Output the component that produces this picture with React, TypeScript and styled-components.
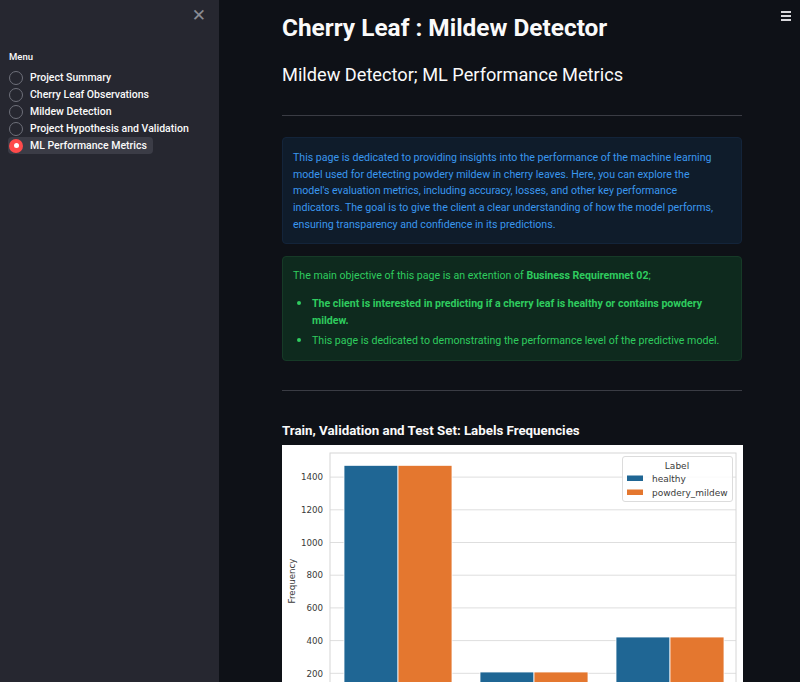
import React from "react";
import styled, { createGlobalStyle } from "styled-components";

const Global = createGlobalStyle`
  html, body { margin: 0; padding: 0; height: 100%; overflow: hidden; background: #0e1117; }
  #root { height: 100%; }
  * { box-sizing: border-box; }
`;

const Shell = styled.div`
  display: flex;
  width: 800px;
  height: 682px;
  overflow: hidden;
  font-family: Roboto, "Liberation Sans", sans-serif;
  color: #fafafa;
`;

const Sidebar = styled.aside`
  position: relative;
  width: 219px;
  flex-shrink: 0;
  background: #262730;
  padding: 50px 8px 0 8px;
  display: flex;
  flex-direction: column;
`;

const CloseBtn = styled.div`
  position: absolute;
  top: 7px;
  right: 13px;
  color: #8a8c94;
  font-size: 17px;
  font-weight: 700;
  line-height: 1;
  font-family: "DejaVu Sans", sans-serif;
`;

const MenuLabel = styled.div`
  font-size: 9.5px;
  font-weight: 500;
  padding-left: 1px;
  height: 14px;
  line-height: 14px;
  margin-bottom: 5px;
  color: #fafafa;
`;

const RadioList = styled.div`
  display: flex;
  flex-direction: column;
  align-items: flex-start;
`;

const RadioRow = styled.div<{ $active?: boolean }>`
  display: flex;
  align-items: center;
  gap: 7px;
  height: 17px;
  padding: 0 6px 0 1px;
  border-radius: 4px;
  background: ${(p) => (p.$active ? "#3b3c46" : "transparent")};
  font-size: 10.5px;
  font-weight: 500;
  color: #fafafa;
  white-space: nowrap;
`;

const RadioDot = styled.span<{ $active?: boolean }>`
  width: 14px;
  height: 14px;
  border-radius: 50%;
  flex-shrink: 0;
  border: ${(p) => (p.$active ? "none" : "1.5px solid #6e707a")};
  background: ${(p) => (p.$active ? "#ff4b4b" : "transparent")};
  display: flex;
  align-items: center;
  justify-content: center;
  &::after {
    content: "";
    display: ${(p) => (p.$active ? "block" : "none")};
    width: 5px;
    height: 5px;
    border-radius: 50%;
    background: #ffffff;
  }
`;

const Main = styled.main`
  position: relative;
  flex: 1;
  background: #0e1117;
  overflow: hidden;
  padding: 12px 0 0 63px;
`;

const MenuBtn = styled.div`
  position: absolute;
  top: 11px;
  right: 9px;
  width: 10px;
  display: flex;
  flex-direction: column;
  gap: 2px;
  & span {
    display: block;
    height: 2px;
    background: #d8d8dc;
  }
`;

const Content = styled.div`
  width: 460px;
  display: flex;
  flex-direction: column;
`;

const Title = styled.h1`
  margin: 0;
  font-size: 24.4px;
  font-weight: 700;
  line-height: 32px;
  color: #fafafa;
`;

const Subtitle = styled.h2`
  margin: 18px 0 0 0;
  font-size: 18.2px;
  font-weight: 400;
  line-height: 26px;
  color: #fafafa;
`;

const Rule = styled.hr<{ $top: number; $bottom: number }>`
  border: none;
  height: 1px;
  background: #3a3c44;
  margin: ${(p) => p.$top}px 0 ${(p) => p.$bottom}px 0;
  width: 100%;
`;

const Alert = styled.div<{ $kind: "info" | "success" }>`
  border-radius: 4px;
  background: ${(p) => (p.$kind === "info" ? "#0f1c2b" : "#0e2a1e")};
  border: 1px solid ${(p) => (p.$kind === "info" ? "#13243a" : "#163a27")};
  color: ${(p) => (p.$kind === "info" ? "#3a97ef" : "#2fcc5f")};
  font-size: 10.6px;
  line-height: 16.7px;
  padding: ${(p) => (p.$kind === "info" ? "12px 10px 9px 10px" : "11px 10px 9px 10px")};
  margin-bottom: 12px;
  & p { margin: 0; white-space: nowrap; }
  & b { font-weight: 700; }
`;

const Bullets = styled.ul`
  margin: 11px 0 0 0;
  padding-left: 19px;
  white-space: nowrap;
  & li { margin: 0 0 2px 0; }
  & li::marker { font-size: 13px; }
`;

const SectionTitle = styled.h3`
  margin: 0 0 4px 0;
  font-size: 13.3px;
  font-weight: 700;
  line-height: 20px;
  color: #fafafa;
`;

const ChartFrame = styled.div`
  width: 461px;
  background: #ffffff;
`;

const AXL = 48;
const AXR = 454;
const AXT = 8;
const Y0 = 261;
const K = 0.1635;
const yOf = (v: number) => Y0 - v * K;

const groups = [
  { label: "train", h: 1472, x: 62 },
  { label: "validation", h: 208, x: 198 },
  { label: "test", h: 422, x: 334 },
];
const BLUE = "#1f6694";
const ORANGE = "#e4772f";
const BW = 54;

function FreqChart() {
  const ticks = [0, 200, 400, 600, 800, 1000, 1200, 1400];
  return (
    <svg width={461} height={300} viewBox="0 0 461 300" style={{ display: "block" }}>
      <rect x={0} y={0} width={461} height={300} fill="#ffffff" />
      {ticks.map((t) => (
        <g key={t}>
          <line x1={AXL} x2={AXR} y1={yOf(t)} y2={yOf(t)} stroke="#dedede" strokeWidth={1} />
          <text
            x={41}
            y={yOf(t) + 3.2}
            textAnchor="end"
            fontFamily="DejaVu Sans, sans-serif"
            fontSize={8.7}
            fill="#3a3a3a"
          >
            {t}
          </text>
        </g>
      ))}
      <rect x={AXL} y={AXT} width={AXR - AXL} height={Y0 - AXT} fill="none" stroke="#d6d6d6" strokeWidth={1} />
      {groups.map((g) => (
        <g key={g.label}>
          <rect x={g.x} y={yOf(g.h)} width={BW} height={Y0 - yOf(g.h)} fill={BLUE} stroke="#ffffff" strokeWidth={0.8} />
          <rect x={g.x + BW} y={yOf(g.h)} width={BW} height={Y0 - yOf(g.h)} fill={ORANGE} stroke="#ffffff" strokeWidth={0.8} />
          <text
            x={g.x + BW}
            y={Y0 + 13}
            textAnchor="middle"
            fontFamily="DejaVu Sans, sans-serif"
            fontSize={8.7}
            fill="#3a3a3a"
          >
            {g.label}
          </text>
        </g>
      ))}
      <text
        x={(AXL + AXR) / 2}
        y={Y0 + 27}
        textAnchor="middle"
        fontFamily="DejaVu Sans, sans-serif"
        fontSize={8.7}
        fill="#3a3a3a"
      >
        Set
      </text>
      <text
        transform={`translate(13 136) rotate(-90)`}
        textAnchor="middle"
        fontFamily="DejaVu Sans, sans-serif"
        fontSize={8.7}
        fill="#3a3a3a"
      >
        Frequency
      </text>
      <rect x={340.5} y={11.5} width={110} height={45} rx={2.5} fill="#ffffff" fillOpacity={0.85} stroke="#dcdcdc" strokeWidth={1} />
      <text x={395} y={23.5} textAnchor="middle" fontFamily="DejaVu Sans, sans-serif" fontSize={9} fill="#3a3a3a">
        Label
      </text>
      <rect x={345} y={30.5} width={16} height={5.5} fill={BLUE} />
      <text x={370} y={36.5} fontFamily="DejaVu Sans, sans-serif" fontSize={9} fill="#3a3a3a">
        healthy
      </text>
      <rect x={345} y={44.5} width={16} height={5.5} fill={ORANGE} />
      <text x={370} y={50.5} fontFamily="DejaVu Sans, sans-serif" fontSize={9} fill="#3a3a3a">
        powdery_mildew
      </text>
    </svg>
  );
}

const menu = [
  "Project Summary",
  "Cherry Leaf Observations",
  "Mildew Detection",
  "Project Hypothesis and Validation",
  "ML Performance Metrics",
];

export default function App() {
  return (
    <>
      <Global />
      <Shell>
        <Sidebar>
          <CloseBtn>✕</CloseBtn>
          <MenuLabel>Menu</MenuLabel>
          <RadioList>
            {menu.map((m, i) => (
              <RadioRow key={m} $active={i === 4}>
                <RadioDot $active={i === 4} />
                {m}
              </RadioRow>
            ))}
          </RadioList>
        </Sidebar>
        <Main>
          <MenuBtn>
            <span />
            <span />
            <span />
          </MenuBtn>
          <Content>
            <Title>Cherry Leaf : Mildew Detector</Title>
            <Subtitle>Mildew Detector; ML Performance Metrics</Subtitle>
            <Rule $top={27} $bottom={21} />
            <Alert $kind="info">
              <p>
                This page is dedicated to providing insights into the performance of the machine learning
                <br />
                model used for detecting powdery mildew in cherry leaves. Here, you can explore the
                <br />
                model's evaluation metrics, including accuracy, losses, and other key performance
                <br />
                indicators. The goal is to give the client a clear understanding of how the model performs,
                <br />
                ensuring transparency and confidence in its predictions.
              </p>
            </Alert>
            <Alert $kind="success">
              <p>
                The main objective of this page is an extention of <b>Business Requiremnet 02</b>;
              </p>
              <Bullets>
                <li>
                  <b>
                    The client is interested in predicting if a cherry leaf is healthy or contains powdery
                    <br />
                    mildew.
                  </b>
                </li>
                <li>This page is dedicated to demonstrating the performance level of the predictive model.</li>
              </Bullets>
            </Alert>
            <Rule $top={17} $bottom={30} />
            <SectionTitle>Train, Validation and Test Set: Labels Frequencies</SectionTitle>
            <ChartFrame>
              <FreqChart />
            </ChartFrame>
          </Content>
        </Main>
      </Shell>
    </>
  );
}
